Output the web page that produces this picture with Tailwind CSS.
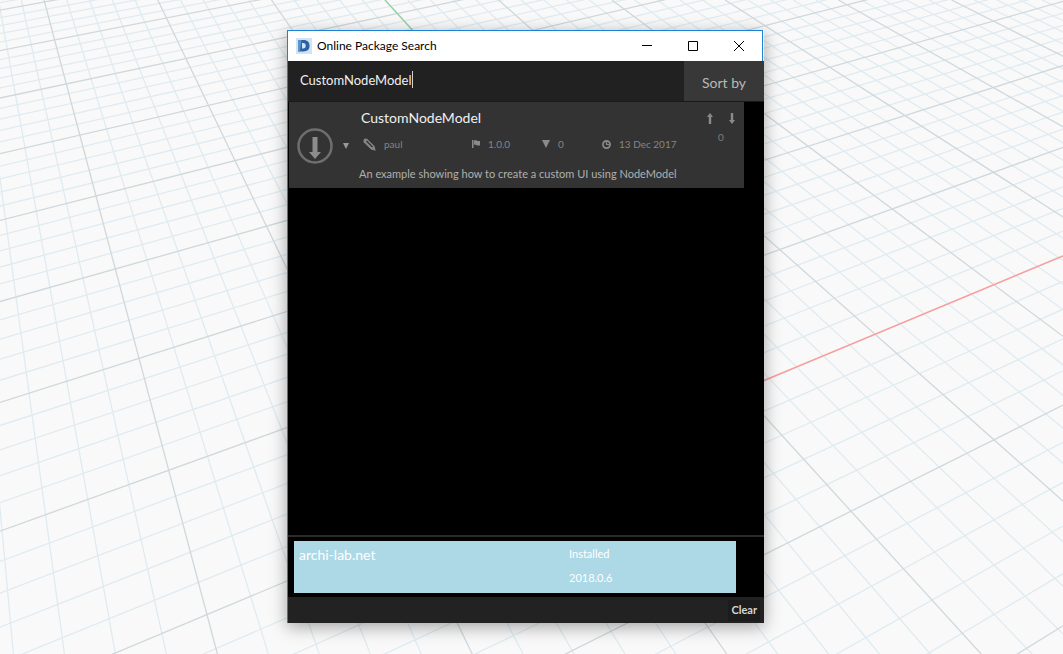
<!DOCTYPE html>
<html lang="en">
<head>
<meta charset="utf-8">
<title>Online Package Search</title>
<script src="https://cdn.jsdelivr.net/npm/@tailwindcss/browser@4"></script>
</head>
<body class="relative min-h-screen overflow-hidden bg-[#f9f9f9] font-['Lato','Open_Sans',sans-serif]">
<svg id="grid" class="absolute inset-0 h-full w-full" viewBox="0 0 1063 654" preserveAspectRatio="xMinYMin slice" fill="none" stroke-width="1.3" aria-hidden="true"></svg>

<main class="absolute left-[287px] top-[30px] w-[477px] border-l border-[#1883d7] shadow-[0_4px_16px_rgba(0,0,0,0.35)]">
  <header class="mr-px flex h-[31px] items-center border-r border-t border-[#1883d7] bg-white">
    <svg class="ml-2 size-4" viewBox="0 0 16 16" aria-hidden="true"><rect width="16" height="16" fill="#d3e3f3"/><path d="M2 2H7.500C11.500 2 13.500 4.200 13.500 7.800S11.500 13.500 7.500 13.500H2z" fill="#2b62a5"/><path d="M6 5v5.500h1.200c1.700 0 2.500-.9 2.500-2.700S8.900 5 7.200 5z" fill="#d3e3f3"/><path d="M2 2h3.500L4 13.500H2z" fill="#5b93cb"/></svg>
    <h1 class="ml-[5px] flex-1 text-[12px] text-black">Online Package Search</h1>
    <button class="flex h-full w-[46px] items-center justify-center" aria-label="Minimize"><svg class="size-[10px]" viewBox="0 0 10 10" stroke="#000"><path d="M0 4.500h10"/></svg></button>
    <button class="flex h-full w-[46px] items-center justify-center" aria-label="Maximize"><svg class="size-[10px]" viewBox="0 0 10 10" stroke="#000" fill="none"><path d="M.5 .5h9v9h-9z"/></svg></button>
    <button class="flex h-full w-[46px] items-center justify-center" aria-label="Close"><svg class="size-[10px]" viewBox="0 0 10 10" stroke="#000"><path d="M0 0l10 10M10 0L0 10"/></svg></button>
  </header>

  <div class="flex h-[40px] bg-[#212121]">
    <label class="flex flex-1 items-center pl-3">
      <input class="field-sizing-content bg-transparent text-[13px] text-[#f0f0f0] outline-none" value="CustomNodeModel" aria-label="Search packages">
      <span class="mb-1 h-[17px] w-px bg-[#d0d0d0]"></span>
    </label>
    <button class="w-[80px] bg-[#383838] pt-[2px] text-[14px] text-[#b8b8b8]">Sort by</button>
  </div>

  <section class="h-[434px] border-t border-[#191919] bg-black">
    <article class="ml-px mr-5 flex h-[86px] bg-[#333]">
      <button class="ml-2 flex w-10 items-center pt-[2px]" aria-label="Install"><svg class="size-9" viewBox="0 0 36 36" fill="none"><circle cx="18" cy="18" r="16.500" stroke="#6e6e6e" stroke-width="2.500"/><path d="M15.500 9h5v15h3.500l-6 7-6-7h3.500z" fill="#8c8c8c"/></svg></button>
      <button class="flex w-[17px] items-center justify-center pt-[2px]" aria-label="Choose version"><svg class="size-[6px]" viewBox="0 0 6 6" fill="#999"><path d="M0 0h6L3 6z"/></svg></button>
      <div class="flex flex-1 flex-col pt-[5px]">
        <h2 class="pl-[7px] text-[14px] leading-[22px] text-[#f0f0f0]">CustomNodeModel</h2>
        <div class="mt-[3px] flex h-6 items-center pl-[9px] text-[10px] text-[#858585]">
          <span class="flex w-[109px] items-center gap-2"><svg class="size-[13px]" viewBox="0 0 13 13"><path d="M.5 2.500Q.5 .5 2.500 .5L4 .8 11.500 8l1.200 4.700L8 11.500.7 4.200z" fill="#858585"/><path d="M3.500 3l6 6" stroke="#333" stroke-width="1.200"/></svg>paul</span>
          <span class="flex w-[70px] items-center gap-2"><svg class="size-2" viewBox="0 0 8 8" fill="#8a8a8a"><path d="M0 0h1.500v8H0zM2 .3h2.500l1 .8H8v4.500H5l-1-.8H2z"/></svg>1.0.0</span>
          <span class="flex w-[60px] items-center gap-2"><svg class="size-2" viewBox="0 0 8 8" fill="#8a8a8a"><path d="M0 0h8L4 8z"/></svg>0</span>
          <span class="flex items-center gap-2"><svg class="size-[9px]" viewBox="0 0 9 9" fill="none" stroke="#8a8a8a"><circle cx="4.500" cy="4.500" r="3.600" stroke-width="1.700"/><path d="M4.500 1.500v3h3" stroke-width="1.200"/></svg>13 Dec 2017</span>
        </div>
        <p class="mt-[7px] whitespace-nowrap pl-[5px] text-[11px] leading-[22px] text-[#b0b0b0]">An example showing how to create a custom UI using NodeModel</p>
      </div>
      <div class="flex w-[46px] flex-col items-center gap-[6px] pt-[11px]">
        <div class="flex h-[11px] items-start gap-[14px]">
          <button aria-label="Upvote"><svg class="h-[11px] w-2" viewBox="0 0 8 11" fill="#8a8a8a"><path d="M4 0l3 4H5.200v7H2.800V4H1z"/></svg></button>
          <button aria-label="Downvote"><svg class="h-[11px] w-2" viewBox="0 0 8 11" fill="#8a8a8a"><path d="M4 11l3-4H5.200V0H2.800v7H1z"/></svg></button>
        </div>
        <span class="text-[10px] leading-[14px] text-[#7d7d7d]">0</span>
      </div>
    </article>
  </section>

  <section class="border-t-2 border-[#2b2b2b] bg-black pb-1 pl-[6px] pr-7 pt-1">
    <div class="flex h-[52px] bg-[#add8e6] pl-[5px] text-white">
      <h3 class="w-[270px] pt-[3px] text-[14px] leading-[22px]">archi-lab.net</h3>
      <div class="text-[11px]"><p class="leading-[25px]">Installed</p><p class="leading-6">2018.0.6</p></div>
    </div>
  </section>
  <footer class="flex h-[26px] items-center justify-end bg-[#222] pr-1">
    <button class="h-[21px] bg-[#1c1c1c] px-[3px] text-[11px] font-bold text-[#d5d5d5]">Clear</button>
  </footer>
</main>

<script>
// Perspective ground plane: homogeneous image of the plane's x axis, y axis and corner.
const xDir = [123.6054, -22.12144, 0.04238249];
const yDir = [7.177277, 39.51979, -0.07492399];
const corner = [-66.66093, 63.78084, 1];
const cross = (a, b) => [a[1]*b[2]-a[2]*b[1], a[2]*b[0]-a[0]*b[2], a[0]*b[1]-a[1]*b[0]];
const offset = (dir, t) => corner.map((c, i) => c + t * dir[i]);
let lines = '';
// Five cells between two major lines; minor lines are drawn first.
for (const major of [false, true]) {
  for (let k = -60; k <= 90; k++) {
    if ((k % 5 === 0) !== major) continue;
    const t = k / 5, color = major ? '#cfd8dc' : '#dfebf1';
    if (t >= -5) {
      const l = cross(offset(xDir, t), yDir);
      const x = y => -(l[1]*y + l[2]) / l[0];
      lines += `<path d="M${x(0)} 0L${x(654)} 654" stroke="${color}"/>`;
    }
    if (t >= -6 && t <= 12) {
      const l = cross(offset(yDir, t), xDir);
      const y = x => -(l[0]*x + l[2]) / l[1];
      lines += `<path d="M0 ${y(0)}L1063 ${y(1063)}" stroke="${color}"/>`;
    }
  }
}
// World axes start at the origin.
lines += '<path d="M741 390L1063 256" stroke="#ff9a9a"/><path d="M741 390L385 0" stroke="#93d3a2"/>';
document.getElementById('grid').innerHTML = lines;
</script>
</body>
</html>
